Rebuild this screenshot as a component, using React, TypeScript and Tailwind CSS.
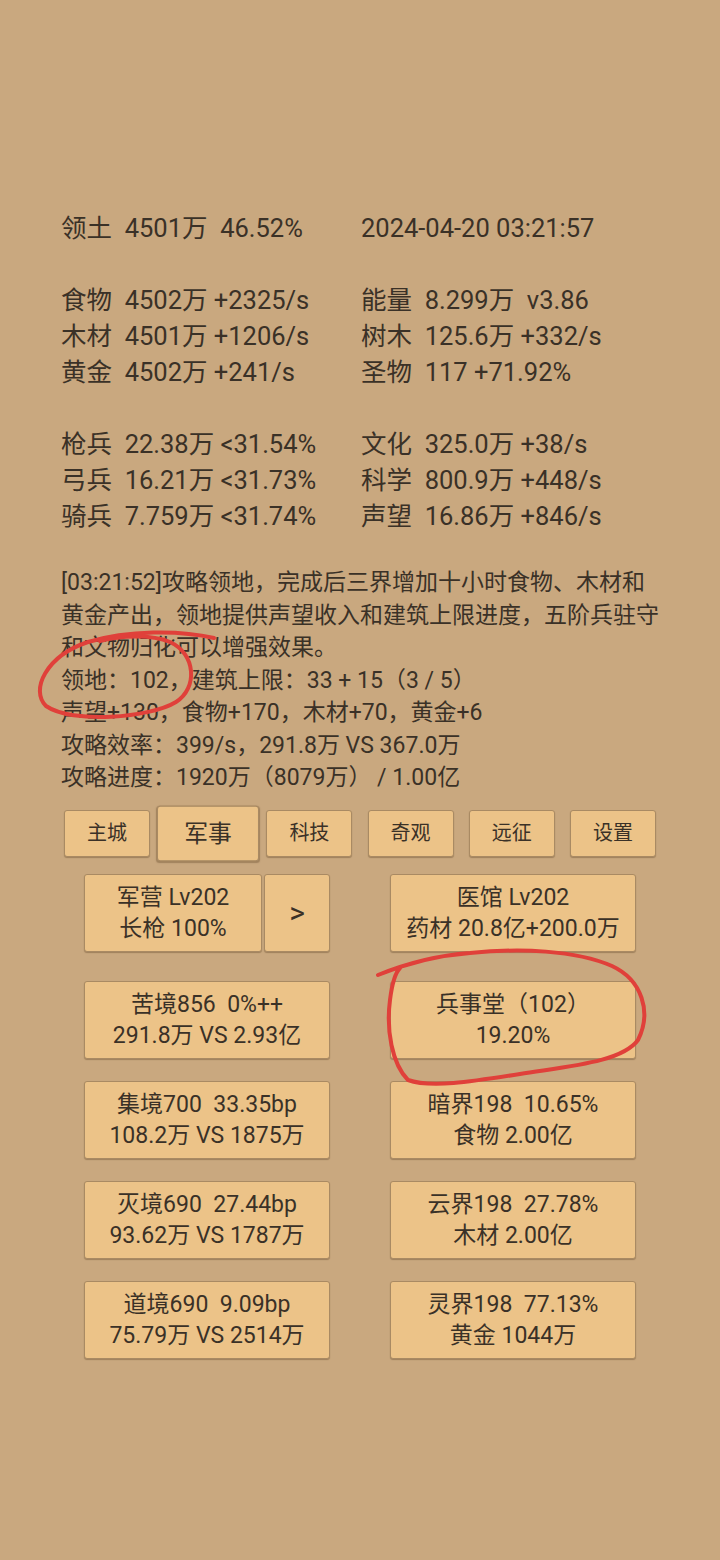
import React from 'react'

const font = { fontFamily: 'Roboto, "Noto Sans CJK SC", sans-serif' }

const statGroups = [
  [['领土  4501万  46.52%', '2024-04-20 03:21:57']],
  [
    ['食物  4502万 +2325/s', '能量  8.299万  v3.86'],
    ['木材  4501万 +1206/s', '树木  125.6万 +332/s'],
    ['黄金  4502万 +241/s', '圣物  117 +71.92%'],
  ],
  [
    ['枪兵  22.38万 <31.54%', '文化  325.0万 +38/s'],
    ['弓兵  16.21万 <31.73%', '科学  800.9万 +448/s'],
    ['骑兵  7.759万 <31.74%', '声望  16.86万 +846/s'],
  ],
]

const logLines = [
  '[03:21:52]攻略领地，完成后三界增加十小时食物、木材和',
  '黄金产出，领地提供声望收入和建筑上限进度，五阶兵驻守',
  '和文物归化可以增强效果。',
  '领地：102，建筑上限：33 + 15（3 / 5）',
  '声望+130，食物+170，木材+70，黄金+6',
  '攻略效率：399/s，291.8万 VS 367.0万',
  '攻略进度：1920万（8079万） / 1.00亿',
]

const tabs = ['主城', '军事', '科技', '奇观', '远征', '设置']

const rows = [
  [['苦境856  0%++', '291.8万 VS 2.93亿'], ['兵事堂（102）', '19.20%']],
  [['集境700  33.35bp', '108.2万 VS 1875万'], ['暗界198  10.65%', '食物 2.00亿']],
  [['灭境690  27.44bp', '93.62万 VS 1787万'], ['云界198  27.78%', '木材 2.00亿']],
  [['道境690  9.09bp', '75.79万 VS 2514万'], ['灵界198  77.13%', '黄金 1044万']],
]

const btn =
  'flex flex-col items-center justify-center rounded-[3px] border border-[#a98a63] bg-[#ecc388] shadow-[0_1px_1px_rgba(80,55,25,0.35)] text-[23px] leading-[31px] whitespace-pre'

function Btn({ lines, className = '' }: { lines: string[]; className?: string }) {
  return (
    <div className={`${btn} ${className}`}>
      {lines.map((l) => (
        <span key={l}>{l}</span>
      ))}
    </div>
  )
}

export default function App() {
  return (
    <div className="relative min-h-[1560px] w-[720px] bg-[#c9a87f] text-[#3a3127]" style={font}>
      {/* Stats */}
      <div className="pt-[210px] pl-[61px] text-[25.5px] leading-[36px] whitespace-pre">
        {statGroups.map((group, gi) => (
          <div key={gi} className={gi > 0 ? 'mt-[36px]' : ''}>
            {group.map(([l, r]) => (
              <div key={l} className="grid grid-cols-[300px_1fr]">
                <span>{l}</span>
                <span>{r}</span>
              </div>
            ))}
          </div>
        ))}
      </div>

      {/* Log */}
      <div className="mt-[33px] pl-[61px] text-[23px] leading-[32.5px] whitespace-nowrap">
        {logLines.map((l) => (
          <div key={l}>{l}</div>
        ))}
      </div>

      {/* Tabs */}
      <div className="mt-[15px] flex gap-[15.2px] pl-[64px]">
        {tabs.map((t) => (
          <div
            key={t}
            className={`flex h-[47px] w-[86px] items-center justify-center rounded-[3px] border border-[#a98a63] bg-[#ecc388] text-[20px] shadow-[0_1px_1px_rgba(80,55,25,0.35)] ${
              t === '军事' ? 'scale-[1.19]' : ''
            }`}
          >
            {t}
          </div>
        ))}
      </div>

      {/* Buildings */}
      <div className="mt-[17px] ml-[84px] w-[552px]">
        <div className="grid h-[78px] grid-cols-[246px_246px] gap-x-[60px]">
          <div className="flex gap-[2px]">
            <Btn lines={['军营 Lv202', '长枪 100%']} className="w-[178px]" />
            <div className={`${btn} w-[66px] text-[30px]`}>&gt;</div>
          </div>
          <Btn lines={['医馆 Lv202', '药材 20.8亿+200.0万']} />
        </div>
        <div className="mt-[29px] grid grid-cols-[246px_246px] gap-x-[60px] gap-y-[22px]">
          {rows.map(([a, b]) => (
            <React.Fragment key={a[0]}>
              <Btn lines={a} className="h-[78px]" />
              <Btn lines={b} className="h-[78px]" />
            </React.Fragment>
          ))}
        </div>
      </div>

      {/* Red hand-drawn annotations */}
      <svg className="pointer-events-none absolute left-0 top-0" width="720" height="1560" fill="none">
        <path
          d="M214 638 C180 630 128 630 88 642 C46 656 30 690 46 706 C72 724 150 718 176 702 C198 688 196 654 170 642 C150 634 120 636 100 641"
          stroke="#e0403a"
          strokeWidth="4"
          strokeLinecap="round"
        />
        <path
          d="M378 975 C400 966 430 956 470 953 C520 948 575 950 612 966 C642 980 652 1012 638 1040 C622 1062 570 1066 520 1074 C470 1082 430 1088 408 1080 C392 1064 386 1030 390 1000 C392 984 396 972 400 968"
          stroke="#e0403a"
          strokeWidth="4"
          strokeLinecap="round"
        />
      </svg>
    </div>
  )
}
